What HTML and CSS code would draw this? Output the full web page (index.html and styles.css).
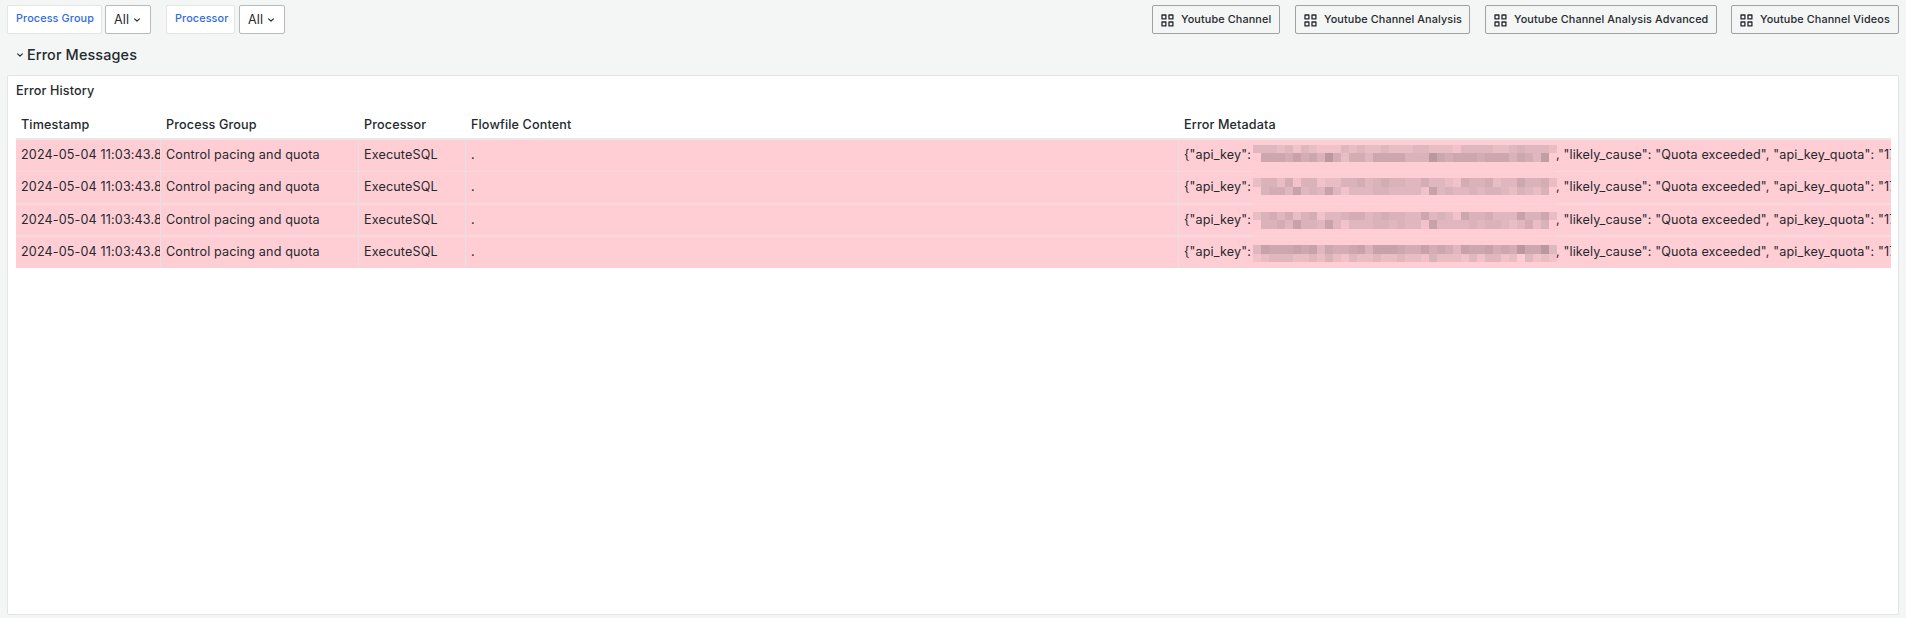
FILE: index.html
```html
<!DOCTYPE html>
<html lang="en">
<head>
<meta charset="utf-8">
<title>Error Messages</title>
<link rel="stylesheet" href="styles.css">
</head>
<body>
<svg class="defs" width="0" height="0">
  <symbol id="apps" viewBox="0 0 13 13"><path d="M1 1h3.9v3.9H1zM8 1h3.9v3.9H8zM1 8h3.9v3.9H1zM8 8h3.9v3.9H8z" fill="none" stroke="currentColor" stroke-width="1.3" stroke-linejoin="round"/></symbol>
  <symbol id="down" viewBox="0 0 8 6"><path d="M1.6 1.8 4 4.1 6.4 1.8" fill="none" stroke="currentColor" stroke-width="1.15" stroke-linecap="round" stroke-linejoin="round"/></symbol>
</svg>
<header class="toolbar">
  <div class="variable">
    <span class="variable-label label-group">Process Group</span>
    <span class="variable-value">All<svg class="chevron"><use href="#down"/></svg></span>
  </div>
  <div class="variable">
    <span class="variable-label label-processor">Processor</span>
    <span class="variable-value">All<svg class="chevron"><use href="#down"/></svg></span>
  </div>
  <nav class="links">
    <a class="link w-channel"><svg class="apps"><use href="#apps"/></svg>Youtube Channel</a>
    <a class="link w-analysis"><svg class="apps"><use href="#apps"/></svg>Youtube Channel Analysis</a>
    <a class="link w-advanced"><svg class="apps"><use href="#apps"/></svg>Youtube Channel Analysis Advanced</a>
    <a class="link w-videos"><svg class="apps"><use href="#apps"/></svg>Youtube Channel Videos</a>
  </nav>
</header>
<h1 class="row-title"><svg class="chevron"><use href="#down"/></svg>Error Messages</h1>
<section class="panel">
  <h2 class="panel-title">Error History</h2>
  <div class="table">
    <div class="row head"><div>Timestamp</div><div>Process Group</div><div>Processor</div><div>Flowfile Content</div><div>Error Metadata</div></div>
    <div class="row r1"><div>2024-05-04 11:03:43.878</div><div>Control pacing and quota</div><div>ExecuteSQL</div><div>.</div><div class="meta"><span class="key">{"api_key":</span><span class="mosaic" data-top="33323132111323223222332221333322343332" data-bottom="06665756495255366664449656665666465380"></span><span class="rest">, "likely_cause": "Quota exceeded", "api_key_quota": "17</span></div></div>
    <div class="row r2"><div>2024-05-04 11:03:43.878</div><div>Control pacing and quota</div><div>ExecuteSQL</div><div>.</div><div class="meta"><span class="key">{"api_key":</span><span class="mosaic" data-top="24425144122445345443353321544523364452" data-bottom="04553734373133344333317343343443243240"></span><span class="rest">, "likely_cause": "Quota exceeded", "api_key_quota": "17</span></div></div>
    <div class="row r3"><div>2024-05-04 11:03:43.878</div><div>Control pacing and quota</div><div>ExecuteSQL</div><div>.</div><div class="meta"><span class="key">{"api_key":</span><span class="mosaic" data-top="24535245133455345443363431644533374462" data-bottom="04453744373133344343317333343443235240"></span><span class="rest">, "likely_cause": "Quota exceeded", "api_key_quota": "17</span></div></div>
    <div class="row r4"><div>2024-05-04 11:03:43.878</div><div>Control pacing and quota</div><div>ExecuteSQL</div><div>.</div><div class="meta"><span class="key">{"api_key":</span><span class="mosaic" data-top="37666767365567477765575653766756596693" data-bottom="12333223242132232232214222131331203121"></span><span class="rest">, "likely_cause": "Quota exceeded", "api_key_quota": "17</span></div></div>
  </div>
</section>
<script src="mosaic.js"></script>
</body>
</html>
```
FILE: styles.css
```css
* { box-sizing: border-box; }
body {
  margin: 0;
  height: 618px;
  padding: 5px 7px 3px;
  overflow: hidden;
  background: #f4f5f5;
  color: #24292e;
  font-family: Inter, "Liberation Sans", sans-serif;
  font-size: 12.6px;
  letter-spacing: 0.135px;
  display: flex;
  flex-direction: column;
}
.defs { display: none; }
.toolbar { display: flex; height: 29px; flex: none; }
.variable { display: flex; gap: 3px; margin-right: 15px; }
.variable + .variable { gap: 4px; }
.variable-label {
  height: 29px;
  padding: 0 0 0 8px;
  border: 1px solid #e3e4e5;
  border-radius: 2px;
  background: #fff;
  color: #2f6be2;
  font-size: 10.8px;
  font-weight: 500;
  line-height: 25px;
  white-space: nowrap;
}
.label-group { width: 95px; }
.label-processor { width: 69px; }
.variable-value {
  width: 46px;
  height: 29px;
  padding-left: 8px;
  display: flex;
  align-items: center;
  border: 1px solid #b7b9ba;
  border-radius: 2px;
  background: #fff;
}
.chevron { width: 8px; height: 6px; }
.variable-value .chevron { margin-left: 4px; }
.links { margin-left: auto; display: flex; }
.link {
  display: flex;
  align-items: center;
  height: 29px;
  padding: 0 0 1px 8px;
  border: 1px solid #9fa1a3;
  border-radius: 2px;
  font-size: 10.8px;
  font-weight: 500;
  white-space: nowrap;
}
.apps { width: 13px; height: 13px; margin: 2px 7px 0 0; flex: none; }
.w-channel { width: 128px; margin-right: 15px; }
.w-analysis { width: 175px; margin-right: 15px; }
.w-advanced { width: 232px; margin-right: 14px; }
.w-videos { width: 168px; }
.row-title {
  margin: 0;
  height: 41px;
  padding: 0 0 0 9px;
  display: flex;
  align-items: center;
  flex: none;
  font-size: 14.4px;
  font-weight: 500;
}
.row-title .chevron { margin-right: 3px; }
.panel {
  height: 540px;
  flex: none;
  padding: 0 7px 0 8px;
  border: 1px solid #e3e4e5;
  border-radius: 2px;
  background: #fff;
}
.panel-title { margin: 0; height: 29px; line-height: 29px; font-size: 12.6px; font-weight: 500; }
.table { overflow: hidden; }
.row {
  display: grid;
  grid-template-columns: 145px 198px 107px 713px 1fr;
  background: #ffced5 no-repeat bottom / 100% 2px;
  line-height: 29px;
}
.row > div {
  min-width: 0;
  padding-left: 5px;
  overflow: hidden;
  white-space: nowrap;
  border-right: 1px solid #e3e1e3;
}
.row > div:last-child { border-right: 0; }
.row.head { height: 35px; background: #fff; font-weight: 500; line-height: 40px; border-bottom: 2px solid #e7e8e8; }
.row.head > div { border-color: transparent; }
/* Row separators stop under the redacted area */
.r1, .r2, .r3 { background-image: linear-gradient(to right, #f6dbde 1237px, #fcd1d7 1237px 1541px, #f6dbde 1541px); }
.r1 { height: 32px; background-size: 100% 1px; }
.r2 { height: 33px; }
.r3 { height: 32px; }
.r4 { height: 31px; }
.meta { display: flex; }
.key { width: 69px; flex: none; }
.rest { margin-left: -1px; }
.mosaic {
  width: 304px;
  height: 17px;
  margin-top: 5px;
  flex: none;
  display: grid;
  grid-template-columns: repeat(38, 8px);
  grid-template-rows: 8px 9px;
}
.r2 .mosaic { margin-top: 6px; grid-template-rows: 9px 8px; }
.r3 .mosaic { margin-top: 7px; }
.r4 .mosaic { margin-top: 8px; grid-template-rows: 9px 8px; }
.l0 { background: #ffccd3; }
.l1 { background: #f2c2ca; }
.l2 { background: #e8bdc4; }
.l3 { background: #e0b7be; }
.l4 { background: #dab2b9; }
.l5 { background: #d3adb3; }
.l6 { background: #cca7ae; }
.l7 { background: #c7a2a8; }
.l8 { background: #c29da4; }
.l9 { background: #bb989e; }
```
FILE: mosaic.js
```js
// Fills each redacted value with its grid of shaded blocks.
document.querySelectorAll(".mosaic").forEach(function (el) {
  (el.dataset.top + el.dataset.bottom).split("").forEach(function (level) {
    var block = document.createElement("i");
    block.className = "l" + level;
    el.appendChild(block);
  });
});
```
